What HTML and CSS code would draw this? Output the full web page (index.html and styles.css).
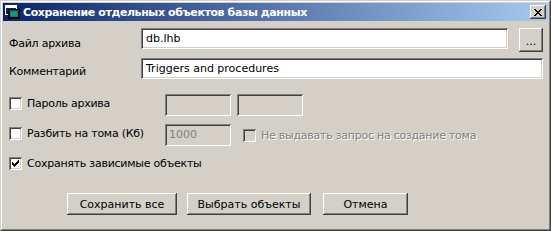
FILE: index.html
```html
<!DOCTYPE html>
<html lang="ru">
<head>
    <meta charset="UTF-8">
    <title>Сохранение отдельных объектов базы данных</title>
    <link rel="stylesheet" href="styles.css">
</head>
<body>
    <div class="window">
        <div class="frame">
            <div class="titlebar">
                <svg class="app-icon" width="16" height="16" viewBox="0 0 16 16">
                    <rect x="1.5" y="1.5" width="11" height="9" fill="#0a246a" stroke="#ffffff"/>
                    <rect x="2" y="2" width="10" height="2" fill="#ffffff"/>
                    <rect x="4.5" y="5.5" width="11" height="9" fill="#000000" stroke="#000000"/>
                    <rect x="6" y="7" width="8" height="6" fill="#008080"/>
                    <rect x="7" y="8" width="6" height="4" fill="#00a080"/>
                    <rect x="5" y="6" width="10" height="1" fill="#404040"/>
                </svg>
                <div class="title">Сохранение отдельных объектов базы данных</div>
                <div class="close-btn">
                    <svg width="8" height="7" viewBox="0 0 8 7">
                        <path d="M0 0h2v1h1v1h2v-1h1v-1h2v1h-1v1h-1v1h-1v1h1v1h1v1h1v1h-2v-1h-1v-1h-2v1h-1v1h-2v-1h1v-1h1v-1h1v-1h-1v-1h-1v-1h-1z" fill="#000"/>
                    </svg>
                </div>
            </div>

            <div class="content">
                <div class="row row-file">
                    <div class="label">Файл архива</div>
                    <div class="edit edit-file">db.lhb</div>
                    <div class="button browse-btn">...</div>
                </div>

                <div class="row row-comment">
                    <div class="label">Комментарий</div>
                    <div class="edit edit-comment">Triggers and procedures</div>
                </div>

                <div class="row row-password">
                    <div class="check-label">
                        <span class="checkbox"></span>
                        <span>Пароль архива</span>
                    </div>
                    <div class="edit edit-small disabled"></div>
                    <div class="edit edit-small disabled"></div>
                </div>

                <div class="row row-volume">
                    <div class="check-label">
                        <span class="checkbox"></span>
                        <span>Разбить на тома (Кб)</span>
                    </div>
                    <div class="edit edit-small disabled grey-text">1000</div>
                    <div class="check-label inactive">
                        <span class="checkbox disabled"></span>
                        <span class="disabled-text">Не выдавать запрос на создание тома</span>
                    </div>
                </div>

                <div class="row row-depend">
                    <div class="check-label">
                        <span class="checkbox checked">
                            <svg width="7" height="7" viewBox="0 0 7 7">
                                <path d="M6 0h1v3h-1v1h-1v1h-1v1h-1v1h-1v-1h-1v-1h-1v-3h1v1h1v1h1v-1h1v-1h1z" fill="#000"/>
                            </svg>
                        </span>
                        <span>Сохранять зависимые объекты</span>
                    </div>
                </div>

                <div class="row buttons">
                    <div class="button btn-save">Сохранить все</div>
                    <div class="button btn-select">Выбрать объекты</div>
                    <div class="button btn-cancel">Отмена</div>
                </div>
            </div>
        </div>
    </div>
</body>
</html>
```

FILE: styles.css
```css
* {
    margin: 0;
    padding: 0;
    box-sizing: border-box;
}

body {
    font-family: "DejaVu Sans", Tahoma, sans-serif;
    font-size: 11px;
    color: #000000;
    background: #d4d0c8;
}

.window {
    width: 551px;
    height: 231px;
    border: 1px solid;
    border-color: #d4d0c8 #404040 #404040 #d4d0c8;
}

.frame {
    height: 100%;
    border: 1px solid;
    border-color: #ffffff #808080 #808080 #ffffff;
    padding: 1px;
    background: #d4d0c8;
}

.titlebar {
    height: 18px;
    display: flex;
    align-items: center;
    padding: 0 2px 0 1px;
    background: linear-gradient(90deg, #0a246a, #a6caf0);
}

.app-icon {
    flex: none;
    margin-right: 3px;
}

.title {
    flex: 1;
    color: #ffffff;
    font-weight: bold;
    letter-spacing: -0.4px;
    white-space: nowrap;
}

.close-btn {
    width: 16px;
    height: 14px;
    display: flex;
    align-items: center;
    justify-content: center;
    background: #d4d0c8;
    box-shadow: inset -1px -1px #404040, inset 1px 1px #ffffff, inset -2px -2px #808080, inset 2px 2px #d4d0c8;
}

.content {
    padding: 0 0 0 6px;
}

.row {
    display: flex;
    align-items: flex-start;
}

.label {
    width: 132px;
    line-height: 13px;
    letter-spacing: -0.25px;
    flex: none;
}

.edit {
    height: 21px;
    padding: 3px 5px;
    line-height: 15px;
    background: #ffffff;
    box-shadow: inset 1px 1px #808080, inset -1px -1px #ffffff, inset 2px 2px #404040, inset -2px -2px #d4d0c8;
    white-space: nowrap;
    overflow: hidden;
}

.edit.disabled {
    background: #d4d0c8;
}

.grey-text {
    color: #808080;
    padding-left: 4px;
}

.button {
    display: flex;
    align-items: center;
    justify-content: center;
    background: #d4d0c8;
    box-shadow: inset -1px -1px #404040, inset 1px 1px #ffffff, inset -2px -2px #808080, inset 2px 2px #d4d0c8;
    white-space: nowrap;
}

/* row 1 */
.row-file {
    margin-top: 7px;
}

.row-file .label {
    padding-top: 9px;
}

.edit-file {
    width: 367px;
}

.browse-btn {
    width: 24px;
    height: 24px;
    margin-left: 11px;
    padding-top: 3px;
}

/* row 2 */
.row-comment {
    margin-top: 6px;
}

.row-comment .label {
    padding-top: 7px;
}

.edit-comment {
    width: 402px;
}

/* check rows */
.check-label {
    display: flex;
    align-items: center;
    gap: 5px;
    line-height: 13px;
    letter-spacing: -0.25px;
}

.row-password .check-label,
.row-volume > .check-label:first-child {
    width: 156px;
    flex: none;
    padding-top: 3px;
}

.checkbox {
    width: 13px;
    height: 13px;
    flex: none;
    display: flex;
    align-items: center;
    justify-content: center;
    background: #ffffff;
    box-shadow: inset 1px 1px #808080, inset -1px -1px #ffffff, inset 2px 2px #404040, inset -2px -2px #d4d0c8;
}

.checkbox.disabled {
    background: #d4d0c8;
}

.row-password {
    margin-top: 15px;
}

.edit-small {
    width: 66px;
    height: 22px;
    margin-right: 6px;
}

.row-volume {
    margin-top: 8px;
}

.row-volume .edit-small {
    margin-right: 12px;
}

.inactive {
    padding-top: 5px;
}

.disabled-text {
    color: #808080;
    text-shadow: 1px 1px #ffffff;
}

.row-depend {
    margin-top: 11px;
}

/* bottom buttons */
.buttons {
    margin-top: 23px;
    padding-left: 58px;
    gap: 10px;
}

.buttons .button {
    height: 22px;
}

.btn-save {
    width: 110px;
}

.btn-select {
    width: 124px;
}

.btn-cancel {
    width: 85px;
    margin-left: 2px;
}
```
